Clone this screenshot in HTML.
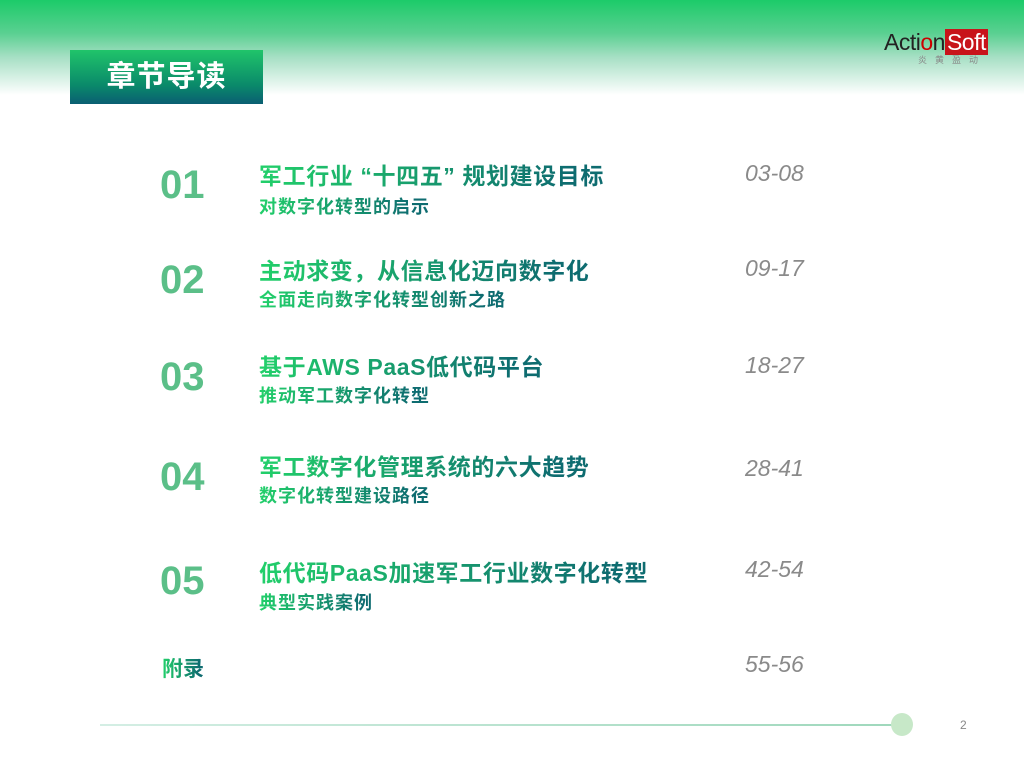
<!DOCTYPE html>
<html><head><meta charset="utf-8"><style>
body{margin:0;width:1024px;height:768px;position:relative;overflow:hidden;background:#fff;font-family:"Liberation Sans","Noto Sans CJK SC",sans-serif}
.hdr{position:absolute;left:0;top:0;width:1024px;height:95px;background:linear-gradient(#1ccb69 0%,#5ad091 35%,#a6dfc4 60%,#fff 100%)}
.tbox{position:absolute;left:70px;top:50px;width:193px;height:54px;background:linear-gradient(#20c46a,#0a8a6a 65%,#0a5e72);color:#fff;font-size:29px;font-weight:bold;line-height:54px;text-align:center;letter-spacing:1px}
.g{position:absolute;font-weight:bold;white-space:nowrap;background:linear-gradient(90deg,#22d06a,#0e6c70 90%);-webkit-background-clip:text;background-clip:text;color:transparent}
.t{left:259px;font-size:23px;letter-spacing:0.6px}
.s{left:259px;font-size:18px;letter-spacing:1px}
.n{position:absolute;left:160px;font-size:40px;font-weight:bold;color:#5bbf88}
.p{position:absolute;left:745px;font-size:23px;font-style:italic;color:#8a8a8a}
</style></head><body>
<div class="hdr"></div>
<div class="tbox">章节导读</div>
<div style="position:absolute;left:884px;top:29px;font-size:23px;color:#222;letter-spacing:-0.5px">Acti<span style="color:#c00">o</span>n<span style="background:#c8141a;color:#fff;padding:0 2px">Soft</span></div>
<div style="position:absolute;left:918px;top:53px;font-size:9px;color:#888;letter-spacing:8px">炎黄盈动</div>

<div class="n" style="top:163px">01</div>
<div class="g t" style="top:157px">军工行业 “十四五” 规划建设目标</div>
<div class="g s" style="top:193px">对数字化转型的启示</div>
<div class="p" style="top:160px">03-08</div>

<div class="n" style="top:258px">02</div>
<div class="g t" style="top:252px">主动求变，从信息化迈向数字化</div>
<div class="g s" style="top:286px">全面走向数字化转型创新之路</div>
<div class="p" style="top:255px">09-17</div>

<div class="n" style="top:355px">03</div>
<div class="g t" style="top:348px">基于AWS PaaS低代码平台</div>
<div class="g s" style="top:382px">推动军工数字化转型</div>
<div class="p" style="top:352px">18-27</div>

<div class="n" style="top:455px">04</div>
<div class="g t" style="top:448px">军工数字化管理系统的六大趋势</div>
<div class="g s" style="top:482px">数字化转型建设路径</div>
<div class="p" style="top:455px">28-41</div>

<div class="n" style="top:559px">05</div>
<div class="g t" style="top:554px">低代码PaaS加速军工行业数字化转型</div>
<div class="g s" style="top:589px">典型实践案例</div>
<div class="p" style="top:556px">42-54</div>

<div class="g" style="left:162px;top:653px;font-size:21px">附录</div>
<div class="p" style="top:651px">55-56</div>

<div style="position:absolute;left:100px;top:724px;width:795px;height:2px;background:linear-gradient(90deg,#d4eee4,#9fd8bc)"></div>
<div style="position:absolute;left:891px;top:713px;width:22px;height:23px;border-radius:50%;background:#c7e8c8"></div>
<div style="position:absolute;left:960px;top:718px;font-size:12px;color:#888">2</div>
</body></html>
